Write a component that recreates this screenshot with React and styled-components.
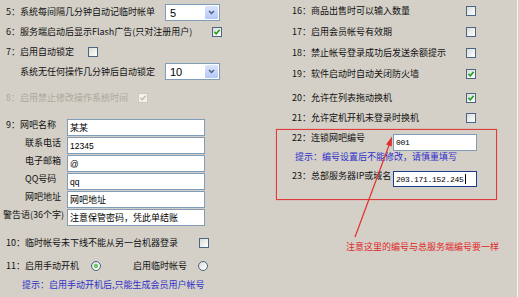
import React from "react";
import styled, { createGlobalStyle } from "styled-components";

const GlobalStyle = createGlobalStyle`
  html, body {
    margin: 0;
    padding: 0;
    background: #d4d0c8;
  }
  body {
    font-family: "Noto Sans CJK SC", "Noto Sans", sans-serif;
    font-size: 9px;
    color: #111;
  }
`;

const Page = styled.div`
  position: relative;
  display: flex;
  width: 518px;
  height: 297px;
  box-sizing: border-box;
  border-right: 1px solid #f6f5f1;
  overflow: hidden;
`;

const LeftCol = styled.div`
  width: 276px;
  flex-shrink: 0;
`;

const RightCol = styled.div`
  flex: 1;
`;

const Row = styled.div`
  display: flex;
  align-items: center;
  height: ${(p) => p.$h || 20}px;
  margin-top: ${(p) => p.$mt || 0}px;
  padding-left: ${(p) => p.$pl ?? 6}px;
  color: ${(p) => (p.$disabled ? "#aca899" : "inherit")};
`;

const Label = styled.span`
  width: ${(p) => p.$w}px;
  flex-shrink: 0;
  white-space: nowrap;
  line-height: 12px;
  align-self: ${(p) => (p.$top ? "flex-start" : "center")};
  margin-top: ${(p) => p.$shift || 0}px;
`;

const Gap = styled.span`
  width: ${(p) => p.$w}px;
  flex-shrink: 0;
`;

const Box = styled.span`
  display: inline-flex;
  align-items: center;
  justify-content: center;
  flex-shrink: 0;
  width: 10px;
  height: 10px;
  box-sizing: border-box;
  border: 1px solid ${(p) => (p.$disabled ? "#cbc8c0" : "#4a6585")};
  background: ${(p) =>
    p.$disabled ? "#f3f2ee" : "linear-gradient(135deg, #dcdcd6, #ffffff)"};
`;

const RadioRing = styled.span`
  display: inline-flex;
  align-items: center;
  justify-content: center;
  flex-shrink: 0;
  width: 10px;
  height: 10px;
  box-sizing: border-box;
  border-radius: 50%;
  border: 1px solid #4a6585;
  background: linear-gradient(135deg, #dcdcd6, #ffffff);

  &::after {
    content: "";
    width: 4px;
    height: 4px;
    border-radius: 50%;
    background: ${(p) => (p.$on ? "radial-gradient(#7fe07f, #21a121)" : "transparent")};
  }
`;

const SelectBox = styled.div`
  display: flex;
  width: 55px;
  height: 17px;
  box-sizing: border-box;
  border: 1px solid #7f9db9;
  background: #fff;
  padding: 1px;
`;

const SelectText = styled.span`
  flex: 1;
  padding-left: 3px;
  font-family: "Liberation Sans", Arial, sans-serif;
  font-size: 11px;
  line-height: 14px;
  color: #000;
`;

const DropButton = styled.span`
  display: flex;
  align-items: center;
  justify-content: center;
  width: 13px;
  border-radius: 1px;
  background: linear-gradient(#dce6fc, #b4c8f6);
`;

const Field = styled.div`
  display: flex;
  align-items: center;
  width: ${(p) => p.$w}px;
  height: ${(p) => p.$h || 17}px;
  box-sizing: border-box;
  padding-left: 2px;
  border: 1px solid ${(p) => (p.$focus ? "#1d3c8e" : "#7f9db9")};
  background: #fff;
  color: #000;
  white-space: nowrap;
  font-family: ${(p) =>
    p.$kind === "mono"
      ? '"Liberation Mono", monospace'
      : p.$kind === "sans"
      ? '"Liberation Sans", Arial, sans-serif'
      : '"Noto Sans CJK SC", sans-serif'};
  font-size: ${(p) => (p.$kind === "mono" ? "8px" : p.$kind === "sans" ? "8.5px" : "9px")};
  letter-spacing: ${(p) => (p.$kind === "mono" ? "-0.3px" : "0")};
`;

const Caret = styled.span`
  display: inline-block;
  width: 1px;
  height: 10px;
  margin-left: 1px;
  background: #000;
`;

const Form = styled.div`
  display: grid;
  grid-template-columns: 65px 138px;
  row-gap: 1px;
  margin-top: 11px;
  padding-left: 2px;
`;

const FormLabel = styled.span`
  align-self: start;
  padding-left: ${(p) => p.$pl}px;
  line-height: 12px;
  white-space: nowrap;
`;

const Hint = styled.div`
  height: ${(p) => p.$h || 12}px;
  line-height: ${(p) => p.$h || 12}px;
  padding-left: ${(p) => p.$pl}px;
  color: #3030c8;
  white-space: nowrap;
`;

const Frame = styled.div`
  width: 221px;
  box-sizing: border-box;
  margin-top: 1px;
  padding: 4px 0 11px 15px;
  border: 1px solid #e03c3c;
  box-shadow: 0 0 1px rgba(224, 60, 60, 0.6);
`;

const FrameRow = styled.div`
  display: flex;
  height: 17px;
  margin-top: ${(p) => p.$mt || 0}px;
`;

const Note = styled.div`
  margin-top: 41px;
  padding-left: 70px;
  line-height: 12px;
  color: #e02828;
  white-space: nowrap;
`;

const Overlay = styled.svg`
  position: absolute;
  left: 0;
  top: 0;
  pointer-events: none;
`;

function Check({ on, disabled }) {
  return (
    <Box $disabled={disabled}>
      {on && (
        <svg width="8" height="8" viewBox="0 0 8 8">
          <path
            d="M1.4 3.8 L3.2 5.8 L6.6 1.9"
            fill="none"
            stroke={disabled ? "#c2bfb6" : "#21a121"}
            strokeWidth="1.6"
          />
        </svg>
      )}
    </Box>
  );
}

function Select({ value }) {
  return (
    <SelectBox>
      <SelectText>{value}</SelectText>
      <DropButton>
        <svg width="7" height="5" viewBox="0 0 7 5">
          <path d="M1 1 L3.5 3.5 L6 1" fill="none" stroke="#4d6185" strokeWidth="1.5" />
        </svg>
      </DropButton>
    </SelectBox>
  );
}

export default function App() {
  return (
    <>
      <GlobalStyle />
      <Page>
        <LeftCol>
          <Row $h={20} $mt={2}>
            <Label $w={159}>5：系统每间隔几分钟自动记临时帐单</Label>
            <Select value="5" />
          </Row>
          <Row>
            <Label $w={206}>6：服务端启动后显示Flash广告(只对注册用户)</Label>
            <Check on />
          </Row>
          <Row>
            <Label $w={82}>7：启用自动锁定</Label>
            <Check />
          </Row>
          <Row $h={19} $pl={20}>
            <Label $w={145}>系统无任何操作几分钟后自动锁定</Label>
            <Select value="10" />
          </Row>
          <Row $mt={7} $disabled>
            <Label $w={132}>8：启用禁止修改操作系统时间</Label>
            <Check on disabled />
          </Row>

          <Form>
            <FormLabel $pl={4}>9：网吧名称</FormLabel>
            <Field $w={138}>某某</Field>
            <FormLabel $pl={23}>联系电话</FormLabel>
            <Field $w={138} $kind="sans">12345</Field>
            <FormLabel $pl={23}>电子邮箱</FormLabel>
            <Field $w={138} $kind="sans">@</Field>
            <FormLabel $pl={23}>QQ号码</FormLabel>
            <Field $w={138} $kind="sans">qq</Field>
            <FormLabel $pl={23}>网吧地址</FormLabel>
            <Field $w={138}>网吧地址</Field>
            <FormLabel $pl={1}>警告语(36个字)</FormLabel>
            <Field $w={138}>注意保管密码，凭此单结账</Field>
          </Form>

          <Row $mt={7}>
            <Label $w={193}>10：临时帐号未下线不能从另一台机器登录</Label>
            <Check />
          </Row>
          <Row $mt={3}>
            <Label $w={85}>11：启用手动开机</Label>
            <RadioRing $on />
            <Gap $w={32} />
            <Label $w={65}>启用临时帐号</Label>
            <RadioRing />
          </Row>
          <Hint $h={18} $pl={22}>提示：启用手动开机后,只能生成会员用户帐号</Hint>
        </LeftCol>

        <RightCol>
          <Row $h={21} $pl={16}>
            <Label $w={174}>16：商品出售时可以输入数量</Label>
            <Check />
          </Row>
          <Row $h={21} $pl={16}>
            <Label $w={174}>17：启用会员帐号有效期</Label>
            <Check />
          </Row>
          <Row $h={21} $pl={16}>
            <Label $w={174}>18：禁止帐号登录成功后发送余额提示</Label>
            <Check />
          </Row>
          <Row $h={21} $pl={16}>
            <Label $w={174}>19：软件启动时自动关闭防火墙</Label>
            <Check on />
          </Row>
          <Row $mt={4} $pl={16}>
            <Label $w={174}>20：允许在列表拖动换机</Label>
            <Check on />
          </Row>
          <Row $pl={16}>
            <Label $w={174}>21：允许定机开机未登录时换机</Label>
            <Check />
          </Row>

          <Frame>
            <FrameRow>
              <Label $w={101} $top $shift={-2}>22：连锁网吧编号</Label>
              <Field $w={84} $kind="mono">001</Field>
            </FrameRow>
            <Hint $pl={3}>提示：编号设置后不能修改，请慎重填写</Hint>
            <FrameRow $mt={8}>
              <Label $w={101} $top $shift={-1}>23：总部服务器IP或域名</Label>
              <Field $w={84} $h={16} $kind="mono" $focus>
                203.171.152.245
                <Caret />
              </Field>
            </FrameRow>
          </Frame>

          <Note>注意这里的编号与总服务端编号要一样</Note>
        </RightCol>

        <Overlay width="519" height="297" viewBox="0 0 519 297">
          <line x1="355" y1="237" x2="389.5" y2="144" stroke="#e03030" strokeWidth="1.2" />
          <polygon points="392,136.5 391.8,146.6 386,144.5" fill="#e03030" />
        </Overlay>
      </Page>
    </>
  );
}
